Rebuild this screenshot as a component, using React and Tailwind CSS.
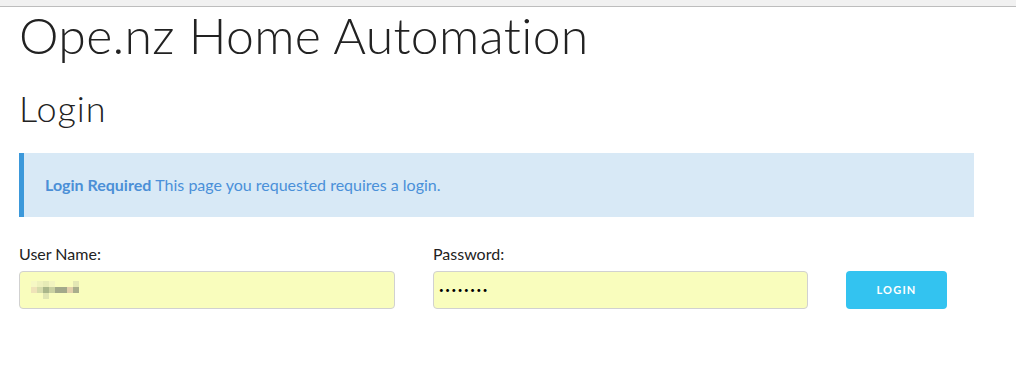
export default function App() {
  const mosaic = [
    [0, 1, '#efe3b8'], [1, 1, '#d6dcab'], [2, 1, '#aab78a'], [3, 1, '#c9d0a0'], [4, 1, '#a3a98a'], [5, 1, '#a3a98a'], [6, 1, '#e2cfaa'], [7, 1, '#a9ae8c'],
    [0, 0, '#f6f8c4'], [1, 0, '#eef1bd'], [2, 0, '#e6ebb6'], [3, 0, '#f2f4c0'], [7, 0, '#e3e7b4'],
    [2, 2, '#dfe5b1'],
  ];

  return (
    <div className="min-h-[386px] bg-white [font-variant-ligatures:none]" style={{ fontFamily: 'Lato, "Liberation Sans", sans-serif' }}>
      <div className="h-[7px] bg-[#f1f1f1] border-b border-[#bdbdbd]" />

      <div className="pl-[19px] pr-[42px]">
        <h1 className="text-[50px] leading-[56px] font-light text-[#222] tracking-[0.3px]">
          Ope.nz Home Automation
        </h1>
        <h2 className="mt-[23px] text-[36px] leading-[44px] font-light text-[#222] tracking-[1px]">Login</h2>

        <div className="mt-[23px] h-[64px] flex items-center bg-[#d8e9f6] border-l-[5px] border-[#3b98da] pl-[21px] text-[16px] text-[#4a90d9]">
          <span className="font-bold text-[#4b8fd6]">Login Required</span>
          <span className="ml-[4px]">This page you requested requires a login.</span>
        </div>

        <div className="mt-[28px] flex items-end gap-[38px]">
          <div className="w-[376px]">
            <label className="block text-[16px] leading-[18px] text-[#222] mb-[8px]">User Name:</label>
            <div className="h-[38px] bg-[#f9fdbd] border border-[#d1d1d1] rounded-[4px] flex items-center pl-[7px]">
              <svg width="56" height="18" viewBox="0 0 8 3" shapeRendering="crispEdges">
                {mosaic.map(([x, y, c], i) => (
                  <rect key={i} x={x} y={y} width="1" height="1" fill={c} />
                ))}
              </svg>
            </div>
          </div>
          <div className="w-[375px]">
            <label className="block text-[16px] leading-[18px] text-[#222] mb-[8px]">Password:</label>
            <div className="h-[38px] bg-[#f9fdbd] border border-[#d1d1d1] rounded-[4px] flex items-center pl-[5px] text-[8px] tracking-[1.6px] text-black">
              ••••••••
            </div>
          </div>
          <button className="w-[101px] h-[38px] rounded-[4px] bg-[#33c3f0] text-white text-[11px] font-bold tracking-[1.2px]">
            LOGIN
          </button>
        </div>
      </div>
    </div>
  );
}
